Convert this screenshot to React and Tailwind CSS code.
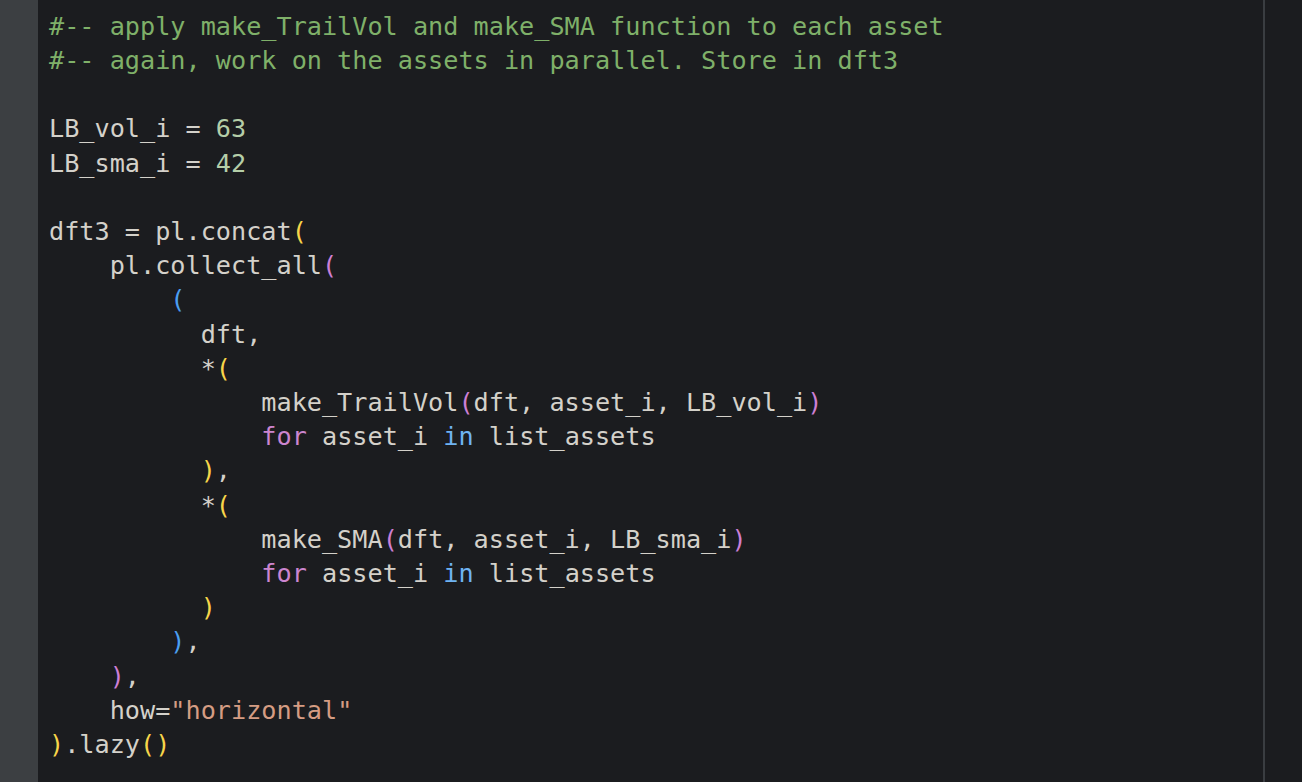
const C = {
  cm: 'text-[#7fb069]',
  tx: 'text-[#d4d1ca]',
  num: 'text-[#b5cea8]',
  y: 'text-[#f7d54a]',
  p: 'text-[#cd7fd4]',
  b: 'text-[#4b9ef0]',
  kw: 'text-[#cc85cf]',
  inn: 'text-[#6fb3f2]',
  str: 'text-[#d59c83]',
};

const lines = [
  [['cm', '#-- apply make_TrailVol and make_SMA function to each asset']],
  [['cm', '#-- again, work on the assets in parallel. Store in dft3']],
  [],
  [['tx', 'LB_vol_i = '], ['num', '63']],
  [['tx', 'LB_sma_i = '], ['num', '42']],
  [],
  [['tx', 'dft3 = pl.concat'], ['y', '(']],
  [['tx', '    pl.collect_all'], ['p', '(']],
  [['tx', '        '], ['b', '(']],
  [['tx', '          dft,']],
  [['tx', '          *'], ['y', '(']],
  [['tx', '              make_TrailVol'], ['p', '('], ['tx', 'dft, asset_i, LB_vol_i'], ['p', ')']],
  [['tx', '              '], ['kw', 'for'], ['tx', ' asset_i '], ['inn', 'in'], ['tx', ' list_assets']],
  [['tx', '          '], ['y', ')'], ['tx', ',']],
  [['tx', '          *'], ['y', '(']],
  [['tx', '              make_SMA'], ['p', '('], ['tx', 'dft, asset_i, LB_sma_i'], ['p', ')']],
  [['tx', '              '], ['kw', 'for'], ['tx', ' asset_i '], ['inn', 'in'], ['tx', ' list_assets']],
  [['tx', '          '], ['y', ')']],
  [['tx', '        '], ['b', ')'], ['tx', ',']],
  [['tx', '    '], ['p', ')'], ['tx', ',']],
  [['tx', '    how='], ['str', '"horizontal"']],
  [['y', ')'], ['tx', '.lazy'], ['y', '()']],
];

const tall = [4, 9, 14, 19];

export default function App() {
  return (
    <div className="flex h-[782px] w-[1302px] overflow-hidden bg-[#1b1c1f]">
      {/* gutter */}
      <div className="w-[38px] shrink-0 bg-[#3c3f42]" />

      {/* code */}
      <div className="flex flex-1 justify-between">
        <pre className="pl-[11px] pt-[10px] font-['DejaVu_Sans_Mono',monospace] text-[25.2px] leading-[34px] whitespace-pre">
          {lines.map((segs, i) => (
            <div key={i} className={tall.includes(i) ? 'h-[35px] leading-[35px]' : 'h-[34px]'}>
              {segs.map(([c, t], j) => (
                <span key={j} className={C[c]}>{t}</span>
              ))}
            </div>
          ))}
        </pre>
        <div className="mr-[37px] w-[2px] bg-[#3a3d41]" />
      </div>
    </div>
  );
}
